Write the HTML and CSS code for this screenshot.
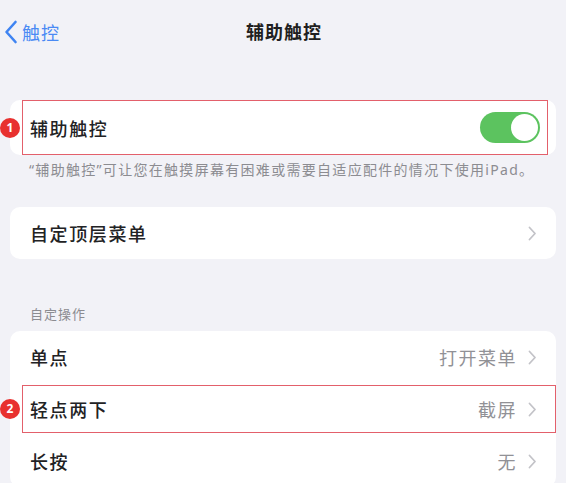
FILE: index.html
```html
<!DOCTYPE html>
<html lang="zh-CN">
<head>
  <meta charset="UTF-8">
  <title>辅助触控</title>
  <meta name="viewport" content="width=device-width, initial-scale=1">
  <link rel="stylesheet" href="styles.css">
</head>
<body>

<header class="nav">
  <a class="back" href="#">
    <svg width="14" height="24" viewBox="0 0 14 24"><path d="M11.5 2 L2.5 12 L11.5 22" fill="none" stroke="#3f84f2" stroke-width="2.6" stroke-linecap="round" stroke-linejoin="round"/></svg>
    <span>触控</span>
  </a>
  <div class="title">辅助触控</div>
</header>

<section class="group first">
  <div class="card">
    <div class="row">
      <span class="label">辅助触控</span>
      <span class="switch on"><span class="knob"></span></span>
      <span class="mark mark-1"></span>
      <span class="badge">1</span>
    </div>
  </div>
  <p class="footnote">“辅助触控”可让您在触摸屏幕有困难或需要自适应配件的情况下使用iPad。</p>
</section>

<section class="group second">
  <div class="card">
    <div class="row short">
      <span class="label">自定顶层菜单</span>
      <span class="chev"><svg width="9" height="15" viewBox="0 0 9 15"><path d="M1.5 1.5 L7 7.5 L1.5 13.5" fill="none" stroke="#c3c3c8" stroke-width="1.8" stroke-linecap="round" stroke-linejoin="round"/></svg></span>
    </div>
  </div>
</section>

<section class="group third">
  <div class="heading">自定操作</div>
  <div class="card">
    <div class="row short">
      <span class="label">单点</span>
      <span class="value">打开菜单</span>
      <span class="chev"><svg width="9" height="15" viewBox="0 0 9 15"><path d="M1.5 1.5 L7 7.5 L1.5 13.5" fill="none" stroke="#c3c3c8" stroke-width="1.8" stroke-linecap="round" stroke-linejoin="round"/></svg></span>
    </div>
    <div class="row short">
      <span class="label">轻点两下</span>
      <span class="value">截屏</span>
      <span class="chev"><svg width="9" height="15" viewBox="0 0 9 15"><path d="M1.5 1.5 L7 7.5 L1.5 13.5" fill="none" stroke="#c3c3c8" stroke-width="1.8" stroke-linecap="round" stroke-linejoin="round"/></svg></span>
      <span class="mark mark-2"></span>
      <span class="badge">2</span>
    </div>
    <div class="row short">
      <span class="label">长按</span>
      <span class="value">无</span>
      <span class="chev"><svg width="9" height="15" viewBox="0 0 9 15"><path d="M1.5 1.5 L7 7.5 L1.5 13.5" fill="none" stroke="#c3c3c8" stroke-width="1.8" stroke-linecap="round" stroke-linejoin="round"/></svg></span>
    </div>
  </div>
</section>

</body>
</html>
```

FILE: styles.css
```css
body {
  margin: 0;
  padding: 0;
  background: #f2f2f7;
  font-family: "Noto Sans", "Noto Sans CJK SC", sans-serif;
  color: #1f1f21;
  overflow: hidden;
}

.nav {
  height: 62px;
  position: relative;
  display: flex;
  align-items: center;
  justify-content: center;
}

.back {
  position: absolute;
  left: 4px;
  top: 19px;
  display: flex;
  align-items: center;
  gap: 4px;
  color: #4a8af4;
  text-decoration: none;
  font-size: 18px;
  letter-spacing: 1px;
}

.title {
  font-size: 18px;
  font-weight: 700;
  letter-spacing: 1px;
  margin-left: 2px;
}

.group {
  margin: 0 10px;
}

.group.first {
  padding-top: 38px;
}

.group.second {
  margin-top: 27px;
}

.group.third {
  margin-top: 46px;
}

.card {
  background: white;
  border-radius: 10px;
}

.row {
  position: relative;
  height: 55px;
  display: flex;
  align-items: center;
  padding: 0 16px 0 20px;
}

.row.short {
  height: 52px;
  padding-right: 19px;
}

.label {
  flex: 1;
  font-size: 18px;
  font-weight: 500;
  letter-spacing: 1.6px;
  color: #222224;
}

.value {
  font-size: 18px;
  letter-spacing: 1.5px;
  color: #919196;
  margin-right: 11px;
}

.chev {
  display: flex;
  align-items: center;
}

.switch {
  width: 60px;
  height: 31px;
  border-radius: 16px;
  background: #5cc35f;
  position: relative;
}

.switch .knob {
  position: absolute;
  right: 2px;
  top: 2px;
  width: 27px;
  height: 27px;
  border-radius: 50%;
  background: white;
}

.footnote {
  margin: 0;
  padding: 5px 0 0 19px;
  line-height: 20px;
  font-size: 14px;
  letter-spacing: 1.3px;
  color: #8c8c91;
}

.heading {
  padding-left: 20px;
  line-height: 18px;
  font-size: 13px;
  letter-spacing: 1px;
  color: #8c8c91;
  margin-bottom: 8px;
}

/* annotation overlays */
.mark {
  position: absolute;
  border: 1.5px solid #e3606b;
  box-sizing: border-box;
}

.mark-1 {
  left: 12px;
  right: 8px;
  top: 0;
  bottom: 0;
}

.mark-2 {
  left: 12px;
  right: 0;
  top: 2px;
  bottom: 2px;
}

.badge {
  position: absolute;
  left: -10px;
  top: 50%;
  margin-top: -10px;
  width: 20px;
  height: 20px;
  border-radius: 50%;
  background: #e8312f;
  color: white;
  font-size: 12px;
  font-weight: 700;
  line-height: 20px;
  text-align: center;
}
```
